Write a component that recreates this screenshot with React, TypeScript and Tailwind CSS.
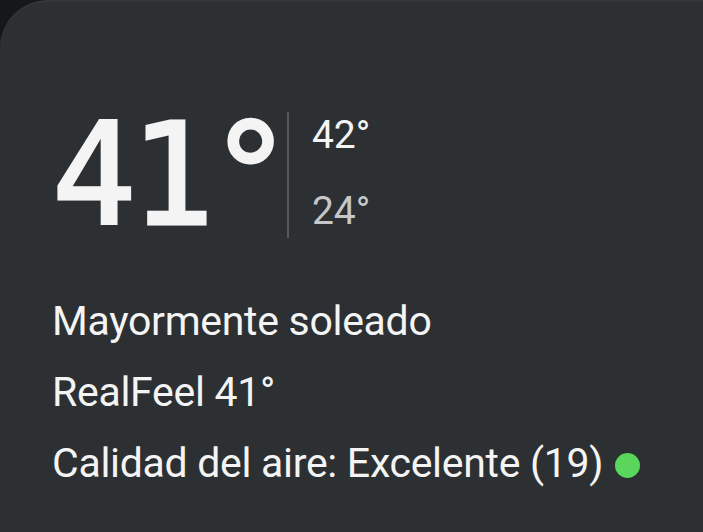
import React from 'react';

export default function App() {
    return (
        <div className="h-[532px] w-[703px] overflow-hidden bg-[#15171a]">
            <div className="h-full w-full rounded-tl-[48px] border-t-2 border-[#34373a] bg-[#2d3033] pl-[52px] pt-[104px] font-['Roboto',sans-serif] text-[#f4f4f4]">
                <div className="flex items-start">
                    <div className="font-['DejaVu_Sans_Mono',monospace] text-[140px] leading-[140px] tracking-[-6px] [-webkit-text-stroke:3px_#f4f4f4]">41°</div>
                    <div className="ml-[0px] mt-[6px] h-[126px] w-[2px] bg-[#55585c]" />
                    <div className="ml-[23px] flex flex-col text-[39px] leading-none">
                        <span className="mt-[10px]">42°</span>
                        <span className="mt-[37px] text-[#c5c7c9]">24°</span>
                    </div>
                </div>
                <div className="mt-[52px] flex flex-col gap-[24px] text-[41px] leading-[47px] tracking-[-0.3px]">
                    <div>Mayormente soleado</div>
                    <div>RealFeel 41°</div>
                    <div className="flex items-center gap-[12px]">
                        <span>Calidad del aire: Excelente (19)</span>
                        <span className="mt-[4px] h-[25px] w-[25px] rounded-full bg-[#5ad65c]" />
                    </div>
                </div>
            </div>
        </div>
    );
}
